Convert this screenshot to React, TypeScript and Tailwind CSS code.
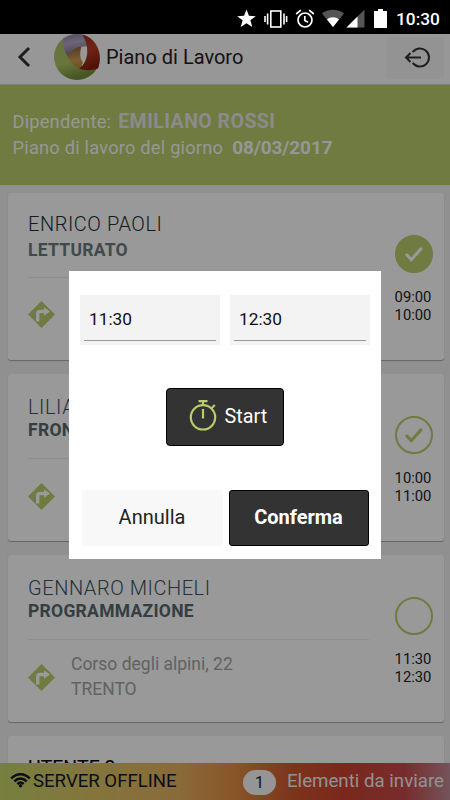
type Status = "done" | "confirmed" | "open";

type Job = {
    name: string;
    task: string;
    street: string;
    city: string;
    from: string;
    to: string;
    status: Status;
};

const jobs: Job[] = [
    {
        name: "ENRICO PAOLI",
        task: "LETTURATO",
        street: "",
        city: "",
        from: "09:00",
        to: "10:00",
        status: "done",
    },
    {
        name: "LILIANA",
        task: "FRONTALI",
        street: "",
        city: "",
        from: "10:00",
        to: "11:00",
        status: "confirmed",
    },
    {
        name: "GENNARO MICHELI",
        task: "PROGRAMMAZIONE",
        street: "Corso degli alpini, 22",
        city: "TRENTO",
        from: "11:30",
        to: "12:30",
        status: "open",
    },
];

export default function App() {
    return (
        <div className="relative flex h-[800px] w-[450px] flex-col overflow-hidden bg-[#f0f0f0] font-['Roboto',sans-serif]">
            <StatusBar />
            <Header />

            <section className="h-[100px] shrink-0 bg-[#b9cd6b] pt-[24px] pl-[12.5px] text-[18.3px] leading-[25.5px] text-[#fafafa]">
                <p className="whitespace-nowrap">
                    <span className="tracking-[0.18px]">Dipendente:</span>
                    <b className="ml-[7px] text-[19.5px] font-bold tracking-[0.45px] text-[#e8e8e8]">
                        EMILIANO ROSSI
                    </b>
                </p>
                <p className="whitespace-nowrap">
                    <span className="tracking-[0.2px]">
                        Piano di lavoro del giorno
                    </span>
                    <b className="ml-[9px] text-[19px] font-bold tracking-[-0.1px]">
                        08/03/2017
                    </b>
                </p>
            </section>

            <main className="flex min-h-0 flex-1 flex-col gap-[14px] overflow-hidden pt-[8px] pr-[6px] pl-[8px]">
                {jobs.map((job) => (
                    <JobCard key={job.name} job={job} />
                ))}
                <article className="h-[167px] shrink-0 rounded-[3px] bg-white pt-[21px] pl-[20px] shadow-[0_1px_1px_rgba(0,0,0,0.3)]">
                    <h2 className="text-[19.5px] leading-[24px] text-black">
                        UTENTE 2
                    </h2>
                </article>
            </main>

            <Footer />

            <div className="absolute inset-x-0 top-[34px] bottom-0 bg-black/40">
                <TimeDialog />
            </div>
        </div>
    );
}

const StatusBar = () => {
    return (
        <div className="flex h-[34px] shrink-0 items-center bg-black pt-[3px] pl-[237px] text-white">
            <svg width="19" height="19" viewBox="0 0 24 24" fill="currentColor">
                <path d="M12 0.5l3.1 8.1 8.6.4-6.8 5.3 2.4 8.5L12 18l-7.3 4.8 2.4-8.5L.3 9l8.6-.4z" />
            </svg>
            <svg
                className="ml-[8px]"
                width="24"
                height="20"
                viewBox="0 0 24 20"
                fill="none"
                stroke="currentColor"
                strokeWidth="1.6"
            >
                <rect x="6.8" y="2" width="10" height="16" />
                <path d="M3.6 4.5v11M1 7v6M20 4.5v11M22.6 7v6" />
            </svg>
            <svg
                className="ml-[7px]"
                width="20"
                height="20"
                viewBox="0 0 20 20"
                fill="none"
                stroke="currentColor"
                strokeWidth="1.7"
            >
                <circle cx="10" cy="11" r="7" />
                <path d="M9.8 7v4.4l3.2 1.9M1.2 5L5.8 1.2M18.8 5L14.2 1.2" />
            </svg>
            <svg
                className="ml-[7px]"
                width="22"
                height="19"
                viewBox="0 0 22 19"
                fill="currentColor"
            >
                <path
                    fill="#555"
                    d="M11 18L0 4.600C3 2 7 0.800 11 0.800S19 2 22 4.600z"
                />
                <path d="M11 18L5 10.400C6.700 9 8.800 8.200 11 8.200S15.300 9 17 10.400z" />
            </svg>
            <svg
                className="ml-[2px]"
                width="19"
                height="19"
                viewBox="0 0 19 19"
                fill="currentColor"
            >
                <path fill="#555" d="M18.500 0.500V18.500H0.500z" />
                <path d="M11.500 7.500V18.500H0.500z" />
            </svg>
            <svg
                className="ml-[9px]"
                width="13"
                height="19"
                viewBox="0 0 13 19"
                fill="currentColor"
            >
                <path d="M4 0h5v2h4v17H0V2h4z" />
            </svg>
            <span className="mt-px ml-[9px] text-[17.3px] leading-[20px] font-medium">
                10:30
            </span>
        </div>
    );
};

const Header = () => {
    return (
        <header className="flex h-[51px] shrink-0 items-center border-t border-b border-t-[#fff] border-b-[#d8d8d8] bg-[#fcfcfc] pr-[6px] pb-[5px] pl-[17px]">
            <svg
                width="14"
                height="22"
                viewBox="0 0 14 22"
                fill="none"
                stroke="#333"
                strokeWidth="3"
            >
                <path d="M12 2L3 11l9 9" />
            </svg>
            <Logo />
            <h1 className="ml-[5px] text-[20px] leading-[24px] text-[#222]">
                Piano di Lavoro
            </h1>
            <button
                type="button"
                className="mt-px ml-auto flex h-[42px] w-[57px] items-center justify-center rounded-[3px] bg-[#f6f6f6] pl-[3px]"
            >
                <svg
                    width="26"
                    height="22"
                    viewBox="0 0 26 22"
                    fill="none"
                    stroke="#333"
                    strokeWidth="2"
                >
                    <path d="M8.700 5.200A9 9 0 1 1 8.700 15.800" />
                    <path d="M17 10.500H2M6.500 6L2 10.500l4.500 4.500" />
                </svg>
            </button>
        </header>
    );
};

const Logo = () => {
    return (
        <svg
            className="ml-[22px] shrink-0"
            width="48"
            height="48"
            viewBox="0 0 48 48"
        >
            <defs>
                <linearGradient id="green" x1="0" y1="0" x2="0.3" y2="1">
                    <stop offset="0" stopColor="#a6bd68" />
                    <stop offset="0.650" stopColor="#b1c567" />
                    <stop offset="1" stopColor="#74903a" />
                </linearGradient>
                <linearGradient id="violet" x1="0" y1="0" x2="0.2" y2="1">
                    <stop offset="0" stopColor="#8b7f9e" />
                    <stop offset="0.450" stopColor="#b4a9c8" />
                    <stop offset="1" stopColor="#7a6d8e" />
                </linearGradient>
                <linearGradient id="red" x1="0" y1="0" x2="0.3" y2="1">
                    <stop offset="0" stopColor="#942b20" />
                    <stop offset="0.500" stopColor="#c03c26" />
                    <stop offset="1" stopColor="#86210f" />
                </linearGradient>
                <linearGradient id="orange" x1="0.500" y1="0" x2="0.600" y2="1">
                    <stop offset="0" stopColor="#8a5f3a" />
                    <stop offset="0.600" stopColor="#cf9c50" />
                    <stop offset="1" stopColor="#b98542" />
                </linearGradient>
            </defs>
            <circle cx="24" cy="24" r="23" fill="url(#green)" />
            {/* opening in the middle */}
            <path
                d="M27.500 14L33.700 13C35 20 33 28 29.500 33L26 30z"
                fill="#fff"
            />
            <path
                d="M14.700 23.600C18 17 23 13.500 28.500 13.500C26.500 19 26.800 25 30 29.500C28.500 32.500 27 34.500 26 35.600C21 33 17 29 14.700 23.600z"
                fill="url(#orange)"
            />
            <path
                d="M10.300 5.600C16 1.500 23 0 29.300 1.600C31.500 5 33 9 33.700 13.500C25.500 12.500 19 16 14.700 23.600C11 18 9.500 12 10.300 5.600z"
                fill="url(#violet)"
            />
            <path
                d="M29.300 1.600C43 5 50.500 21 45 35.600C39 37.800 32 38 26 35.600C36 29 37 14 29.300 1.600z"
                fill="url(#red)"
            />
        </svg>
    );
};

const JobCard = ({ job }: { job: Job }) => {
    const isDone = job.status == "done";

    return (
        <article className="flex h-[167px] shrink-0 rounded-[3px] bg-white pl-[20px] shadow-[0_1px_1px_rgba(0,0,0,0.3)]">
            <div className="w-[341px] shrink-0">
                <div className="h-[85px] border-b border-[#ededed]">
                    <h2
                        className={`text-[20px] leading-[24px] font-light tracking-[0.55px] ${
                            isDone
                                ? "pt-[19px] text-[#1c3038]"
                                : "pt-[21px] text-[#40525a]"
                        }`}
                    >
                        {job.name}
                    </h2>
                    <p
                        className={`text-[17.500px] leading-[22px] font-bold tracking-[0.28px] ${
                            isDone
                                ? "mt-[3px] text-[#6c7a7d]"
                                : "text-[#59686d]"
                        }`}
                    >
                        {job.task}
                    </p>
                </div>
                <div
                    className={`flex items-center ${
                        isDone ? "pt-[11px]" : "pt-[12px]"
                    }`}
                >
                    <DirectionIcon />
                    <p className="ml-[16px] h-[50px] text-[17.500px] leading-[25px] text-[#a3a3a3]">
                        {job.street}
                        <br />
                        {job.city}
                    </p>
                </div>
            </div>
            <div className="ml-[26px] flex w-[38px] shrink-0 flex-col items-center pt-[42px]">
                <StatusIcon status={job.status} />
                <p className="mt-[16px] ml-[-2px] text-center text-[14.800px] leading-[17.500px] text-[#222]">
                    {job.from}
                    <br />
                    {job.to}
                </p>
            </div>
        </article>
    );
};

const DirectionIcon = () => {
    return (
        <svg width="27" height="27" viewBox="0 0 27 27" fill="none">
            <path d="M13.500 0L27 13.500 13.500 27 0 13.500z" fill="#b9cd6b" />
            <path
                d="M9.700 20.500V12.800Q9.700 10.500 12 10.500H17"
                stroke="#fff"
                strokeWidth="3.400"
            />
            <path d="M16 6.200L22 10.500 16 14.800z" fill="#fff" />
        </svg>
    );
};

const StatusIcon = ({ status }: { status: Status }) => {
    return (
        <svg
            className="shrink-0"
            width="38"
            height="38"
            viewBox="0 0 38 38"
            strokeWidth="2"
            stroke="#b9cd6b"
            fill="none"
        >
            <circle
                cx="19"
                cy="19"
                r="18"
                fill={status == "done" ? "#b9cd6b" : "none"}
            />
            {status != "open" && (
                <path
                    d="M12 20L16.300 24.700 25.800 14"
                    stroke={status == "done" ? "#fff" : "#b9cd6b"}
                    strokeWidth="3.200"
                    strokeLinecap="round"
                />
            )}
        </svg>
    );
};

const Footer = () => {
    return (
        <footer className="flex h-[37px] shrink-0 items-center bg-[linear-gradient(90deg,#c5d569_0%,#d9c666_18%,#e6b161_40%,#e38f46_52%,#cf572f_65%,#cb4330_77%,#c74a4a_90%,#c28c98_100%)] pr-[6px] pb-px pl-[10px] text-[18px] leading-[22px]">
            <svg
                className="mb-[2px]"
                width="21"
                height="16"
                viewBox="0 0 21 16"
                fill="none"
                stroke="#111827"
                strokeWidth="2.500"
            >
                <path d="M1.200 6.500C6.500 .7 14.500 .7 19.800 6.500M4.300 9.300C8 5.400 13 5.400 16.700 9.300M7.300 12C9.300 10.200 11.700 10.200 13.700 12" />
                <circle
                    cx="10.500"
                    cy="13.700"
                    r="1.700"
                    fill="#111827"
                    stroke="none"
                />
            </svg>
            <span className="ml-[2px] text-[18.600px] text-[#111827]">
                SERVER OFFLINE
            </span>
            <span className="mt-[3px] ml-auto flex h-[25px] w-[33px] items-center justify-center rounded-full bg-[#f8f8f8] text-[16px] text-[#222]">
                1
            </span>
            <span className="ml-[11px] text-[18.700px] text-[#f2f2f2]">
                Elementi da inviare
            </span>
        </footer>
    );
};

const TimeDialog = () => {
    return (
        <div className="mt-[237px] ml-[69px] flex h-[288px] w-[312px] flex-col items-center bg-white pt-[24px]">
            <div className="flex gap-[10px]">
                <TimeField value="11:30" />
                <TimeField value="12:30" />
            </div>
            <button
                type="button"
                className="mt-[43px] flex h-[58px] w-[118px] items-center rounded-[4px] border border-black bg-[#333] pb-[2px] pl-[22px] text-[20px] text-white"
            >
                <StopwatchIcon />
                <span className="mt-px ml-[7.500px] text-[19.800px]">
                    Start
                </span>
            </button>
            <div className="mt-[44px] flex gap-[6px] text-[20px] leading-[24px]">
                <button
                    type="button"
                    className="h-[56px] w-[141px] rounded-[3px] bg-[#f8f8f8] pb-[2px] text-[#222]"
                >
                    Annulla
                </button>
                <button
                    type="button"
                    className="h-[56px] w-[140px] rounded-[3px] border border-black bg-[#333] pb-[2px] font-bold text-white"
                >
                    Conferma
                </button>
            </div>
        </div>
    );
};

const TimeField = ({ value }: { value: string }) => {
    return (
        <div className="h-[50px] w-[140px] bg-[#f3f3f3] px-[4px]">
            <div className="h-[46px] border-b border-[#999] pt-[12px] pl-[5px] text-[17.300px] leading-[24px] text-[#111]">
                {value}
            </div>
        </div>
    );
};

const StopwatchIcon = () => {
    return (
        <svg
            width="28"
            height="32"
            viewBox="0 0 28 32"
            fill="none"
            stroke="#b9cd6b"
            strokeWidth="2.200"
        >
            <circle cx="14" cy="17.300" r="12.200" />
            <path d="M9.500 1.200h9M14 1v5M14 9v9.500M22.800 8l3-3" />
        </svg>
    );
};
